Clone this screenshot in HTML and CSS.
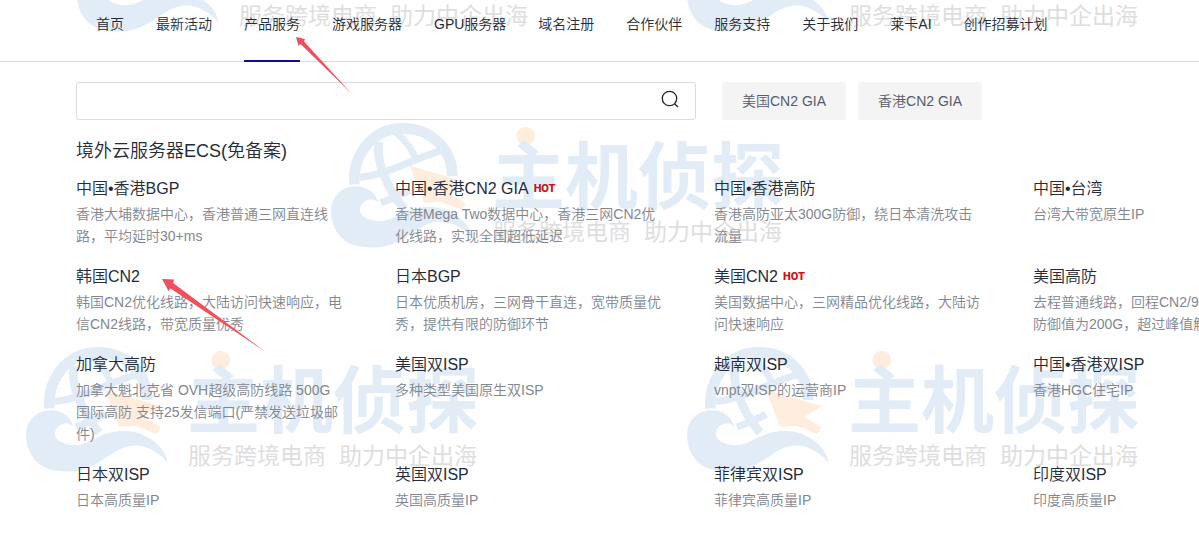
FILE: index.html
```
<!DOCTYPE html>
<html lang="zh-CN">
<head>
<meta charset="utf-8">
<meta name="viewport" content="width=device-width, initial-scale=1">
<title>产品服务</title>
<link rel="stylesheet" href="styles.css">
</head>
<body>
<svg class="defs" aria-hidden="true">
  <symbol id="brand" viewBox="0 0 456 130">
    <g transform="translate(-10 -10) scale(.33333)">
      <g class="brand-line">
        <path d="M104 232C94 150 145 55 250 55C335 55 397 120 397 198" stroke-width="32"/>
        <path d="M177 95C166 155 202 235 252 296" stroke-width="26"/>
        <path d="M118 202C205 196 300 135 374 120" stroke-width="22"/>
        <path d="M222 62C250 85 276 115 290 152" stroke-width="20"/>
        <path d="M182 279C210 268 242 257 270 240" stroke-width="22"/>
      </g>
      <path class="brand-blue" stroke="#fff" stroke-width="6" d="M30 302C30 258 64 226 105 226C148 226 180 253 178 292C173 276 160 268 146 272C126 278 119 295 125 309C137 328 185 341 225 318C285 284 345 278 392 303C432 323 463 356 460 397C440 362 397 335 350 338C300 342 265 395 202 410C150 422 90 416 59 382C40 360 30 332 30 302Z"/>
      <path class="brand-orange" d="M270 167L437 217L385 248L437 280L425 300L362 275L312 278Z"/>
      <circle class="brand-orange" cx="617" cy="78" r="28"/>
    </g>
    <text class="brand-name" x="162" y="83">主机侦探</text>
    <text class="brand-slogan" x="163" y="120">服务跨境电商</text>
    <text class="brand-slogan" x="314" y="120">助力中企出海</text>
  </symbol>
</svg>

<div class="marks" aria-hidden="true">
  <svg class="mark mark-a"><use href="#brand"/></svg>
  <svg class="mark mark-b"><use href="#brand"/></svg>
  <svg class="mark mark-c"><use href="#brand"/></svg>
  <svg class="mark mark-d"><use href="#brand"/></svg>
  <svg class="mark mark-e"><use href="#brand"/></svg>
</div>

<header class="header">
  <nav class="nav">
    <a href="#">首页</a>
    <a href="#">最新活动</a>
    <a href="#" class="active">产品服务</a>
    <a href="#">游戏服务器</a>
    <a href="#">GPU服务器</a>
    <a href="#">域名注册</a>
    <a href="#">合作伙伴</a>
    <a href="#">服务支持</a>
    <a href="#">关于我们</a>
    <a href="#">莱卡AI</a>
    <a href="#">创作招募计划</a>
  </nav>
</header>

<main class="panel">
  <div class="tools">
    <form class="search" role="search">
      <input type="search" aria-label="搜索产品">
      <button type="button" aria-label="搜索">
        <svg width="20" height="20" viewBox="0 0 20 20" fill="none" stroke="#222" stroke-width="1.3"><circle cx="9.5" cy="9.500" r="7.2"/><path d="M14.500 14.800L18 18"/></svg>
      </button>
    </form>
    <div class="quick">
      <button type="button">美国CN2 GIA</button>
      <button type="button">香港CN2 GIA</button>
    </div>
  </div>

  <h2>境外云服务器ECS(免备案)</h2>
  <div class="grid">
    <article><h3><a href="#">中国•香港BGP</a></h3><p>香港大埔数据中心，香港普通三网直连线路，平均延时30+ms</p></article>
    <article><h3><a href="#">中国•香港CN2 GIA</a><span class="hot">HOT</span></h3><p>香港Mega Two数据中心，香港三网CN2优化线路，实现全国超低延迟</p></article>
    <article><h3><a href="#">中国•香港高防</a></h3><p>香港高防亚太300G防御，绕日本清洗攻击流量</p></article>
    <article><h3><a href="#">中国•台湾</a></h3><p>台湾大带宽原生IP</p></article>

    <article><h3><a href="#">韩国CN2</a></h3><p>韩国CN2优化线路，大陆访问快速响应，电信CN2线路，带宽质量优秀</p></article>
    <article><h3><a href="#">日本BGP</a></h3><p>日本优质机房，三网骨干直连，宽带质量优秀，提供有限的防御环节</p></article>
    <article><h3><a href="#">美国CN2</a><span class="hot">HOT</span></h3><p>美国数据中心，三网精品优化线路，大陆访问快速响应</p></article>
    <article><h3><a href="#">美国高防</a></h3><p>去程普通线路，回程CN2/9<br>防御值为200G，超过峰值触</p></article>

    <article><h3><a href="#">加拿大高防</a></h3><p>加拿大魁北克省 OVH超级高防线路 500G国际高防 支持25发信端口(严禁发送垃圾邮件)</p></article>
    <article><h3><a href="#">美国双ISP</a></h3><p>多种类型美国原生双ISP</p></article>
    <article><h3><a href="#">越南双ISP</a></h3><p>vnpt双ISP的运营商IP</p></article>
    <article><h3><a href="#">中国•香港双ISP</a></h3><p>香港HGC住宅IP</p></article>

    <article><h3><a href="#">日本双ISP</a></h3><p>日本高质量IP</p></article>
    <article><h3><a href="#">英国双ISP</a></h3><p>英国高质量IP</p></article>
    <article><h3><a href="#">菲律宾双ISP</a></h3><p>菲律宾高质量IP</p></article>
    <article><h3><a href="#">印度双ISP</a></h3><p>印度高质量IP</p></article>
  </div>
</main>

<svg class="pointer pointer-nav" viewBox="0 0 56 57" aria-hidden="true"><path d="M0 0L9 2L8 4.500L55 56L4.500 7L2.500 9Z"/></svg>
<svg class="pointer pointer-item" viewBox="0 0 104 74" aria-hidden="true"><path d="M0 0L12 .5L11 4L103 72.500L8.500 9.500L6.500 12Z"/></svg>
</body>
</html>
```
FILE: styles.css
```
* { box-sizing: border-box; }

body {
  margin: 0;
  position: relative;
  overflow-x: hidden;
  background: #fff;
  color: #252b38;
  font-family: "Liberation Sans", "Noto Sans CJK SC", sans-serif;
  font-size: 14px;
  font-weight: 350;
  line-height: 22px;
}

a { color: inherit; text-decoration: none; }
h2, h3, p { margin: 0; font-weight: inherit; }
button, input { font: inherit; color: inherit; }

.defs { position: absolute; width: 0; height: 0; }

/* Brand marks tiled behind the page */
.marks { position: absolute; inset: 0; z-index: -1; overflow: hidden; }
.mark { position: absolute; width: 456px; height: 130px; }
.mark-a { left: 76px; top: -96px; }
.mark-b { left: 686px; top: -96px; }
.mark-c { left: 330px; top: 120px; }
.mark-d { left: 25px; top: 344px; }
.mark-e { left: 686px; top: 344px; }
.brand-line { fill: none; stroke: #e1ecf7; }
.brand-blue { fill: #e1ecf7; }
.brand-orange { fill: #feeddc; }
.brand-name { fill: #e1ecf7; font-size: 73px; font-weight: 700; }
.brand-slogan { fill: #dedede; font-size: 23px; font-weight: 400; }

.header { border-bottom: 1px solid #dcdcdf; }
.nav { display: flex; gap: 32px; padding-left: 96px; white-space: nowrap; }
.nav a { padding: 13px 0 25px; margin-bottom: -1px; border-bottom: 2px solid transparent; }
.nav .active { border-color: #0b0b9c; }

.panel { padding: 20px 0 22px 76px; overflow: hidden; }

.tools { display: flex; gap: 26px; }
.search {
  display: flex;
  flex: 0 1 620px;
  height: 38px;
  border: 1px solid #dcdcdf;
  border-radius: 3px;
}
.search input { flex: 1; min-width: 0; padding: 0 12px; border: 0; background: none; outline: 0; }
.search button { display: flex; align-items: center; padding: 0 15px 4px; border: 0; background: none; }
.quick { display: flex; gap: 12px; }
.quick button {
  padding: 0 20px;
  border: 0;
  border-radius: 3px;
  background: #f4f4f4;
  color: #555b6a;
  white-space: nowrap;
}

h2 { margin: 18px 0 14px; font-size: 18px; line-height: 26px; }
.grid { display: grid; grid-template-columns: repeat(4, 319px); row-gap: 19px; }
h3 { display: flex; align-items: center; gap: 5px; margin-bottom: 3px; font-size: 16px; }
.grid p { padding-right: 52px; color: #82868f; }
.hot { color: #c9141e; font: 900 11px/22px Roboto, sans-serif; }

/* Red annotation arrows */
.pointer { position: absolute; fill: #f04f5e; pointer-events: none; }
.pointer-nav { left: 296px; top: 37px; width: 56px; height: 57px; }
.pointer-item { left: 162px; top: 279px; width: 104px; height: 74px; }
```
